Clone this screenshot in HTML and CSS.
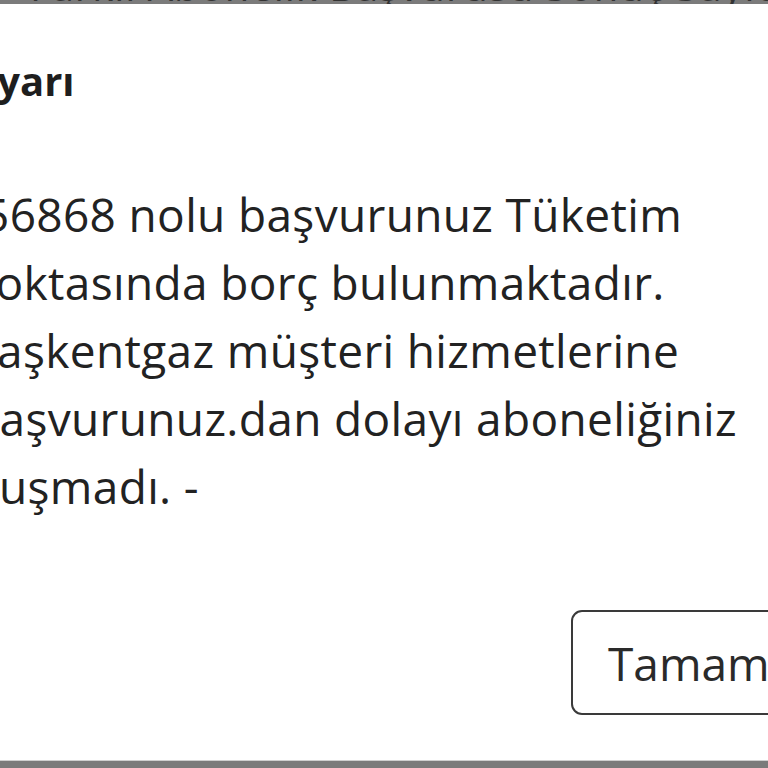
FILE: index.html
```html
<!DOCTYPE html>
<html lang="tr">
<head>
<meta charset="utf-8">
<title>Uyarı</title>
<link rel="stylesheet" href="styles.css">
</head>
<body>
<div class="backdrop-band">
  <div class="backdrop-text">Farklı Abonelik Başvurusu Sonuç Sayfa</div>
</div>
<div class="dialog">
  <div class="dialog-inner">
    <h2 class="title">Uyarı</h2>
    <div class="message">
      <div class="line l1">56868 nolu başvurunuz Tüketim</div>
      <div class="line">noktasında borç bulunmaktadır.</div>
      <div class="line">Başkentgaz müşteri hizmetlerine</div>
      <div class="line l4">başvurunuz.dan dolayı aboneliğiniz</div>
      <div class="line l5">oluşmadı. -</div>
    </div>
    <div class="footer">
      <button class="btn">Tamam</button>
    </div>
  </div>
</div>
<div class="bottom-band"></div>
</body>
</html>
```

FILE: styles.css
```css
html, body {
  margin: 0;
  padding: 0;
}
body {
  width: 768px;
  height: 768px;
  overflow: hidden;
  background: #7b7b7b;
  font-family: "Open Sans", "Noto Sans", sans-serif;
  color: #222222;
}
.backdrop-band {
  height: 4px;
  overflow: hidden;
  background: #7b7b7b;
}
.backdrop-text {
  margin-top: -34px;
  margin-left: 30px;
  font-size: 40px;
  line-height: 40px;
  letter-spacing: 1px;
  color: #333333;
  white-space: nowrap;
}
.dialog {
  height: 756px;
  background: #ffffff;
  border-bottom: 1px solid #cfcfcf;
  overflow: hidden;
}
.dialog-inner {
  margin-left: -33px;
  width: 834px;
  padding-top: 47px;
}
.title {
  margin: 0;
  font-size: 40px;
  line-height: 60px;
  font-weight: 700;
  color: #1e1e1e;
  white-space: nowrap;
}
.message {
  margin-top: 69px;
  font-size: 46px;
  line-height: 68px;
  letter-spacing: 0.35px;
  color: #222222;
}
.line {
  white-space: nowrap;
}
.l1 {
  text-indent: 16px;
}
.l4 {
  text-indent: 4px;
}
.l5 {
  text-indent: -8px;
}
.footer {
  margin-top: 90px;
  display: flex;
  justify-content: flex-end;
}
.btn {
  width: 230px;
  height: 105px;
  padding: 0 0 0 35px;
  border: 2px solid #3a3a3a;
  border-radius: 11px;
  background: #ffffff;
  font-family: "Open Sans", "Noto Sans", sans-serif;
  font-size: 46px;
  color: #2a2a2a;
  text-align: left;
  line-height: 60px;
}
.bottom-band {
  height: 8px;
  background: #7b7b7b;
}
```
